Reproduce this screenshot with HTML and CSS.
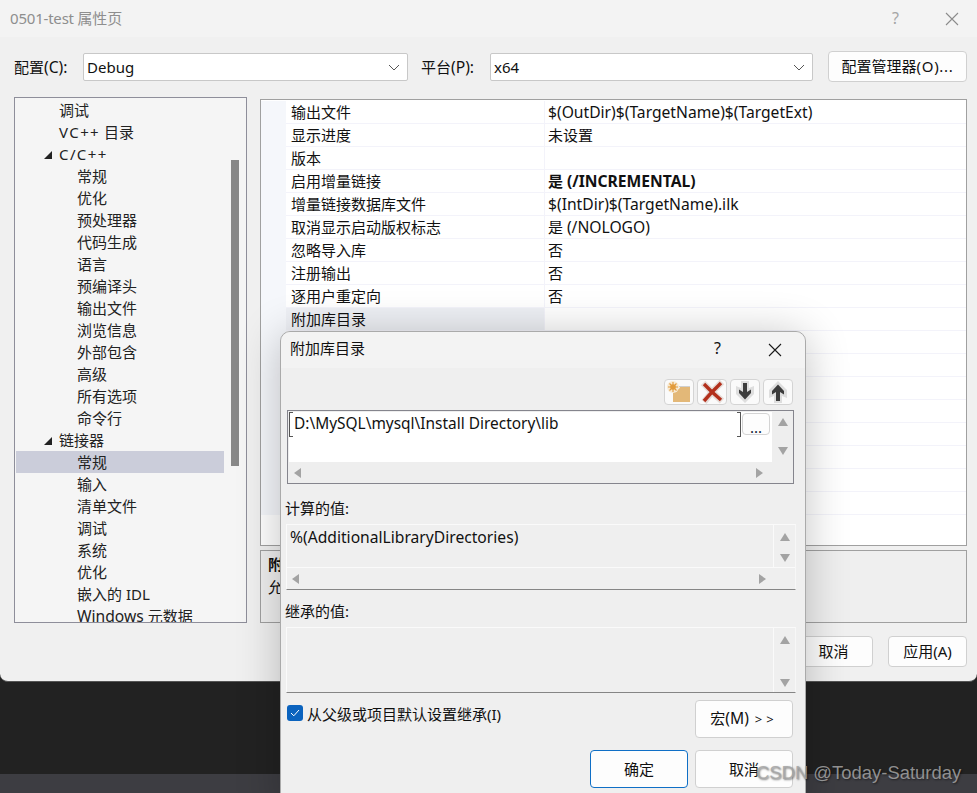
FILE: index.html
```html
<!DOCTYPE html>
<html lang="zh-CN">
<head>
	<meta charset="UTF-8">
	<title>0501-test 属性页</title>
	<link rel="stylesheet" href="styles.css">
</head>
<body>
	<div class="desktop">
		<!-- main property window -->
		<div class="window">
			<div class="titlebar">
				<span class="title-dim">0501-test 属性页</span>
				<span class="help dim">?</span>
				<svg class="close" width="14" height="14" viewBox="0 0 14 14"><path d="M1 1L13 13M13 1L1 13" stroke="#8b8b8b" stroke-width="1.1" fill="none"/></svg>
			</div>
			<div class="config-row">
				<label class="config-label">配置<span class="lat">(C):</span></label>
				<div class="combo combo-config">Debug
					<svg class="chev" width="12" height="7" viewBox="0 0 12 7"><path d="M1 1L6 6L11 1" stroke="#555" fill="none"/></svg>
				</div>
				<label class="platform-label">平台<span class="lat">(P):</span></label>
				<div class="combo combo-platform">x64
					<svg class="chev" width="12" height="7" viewBox="0 0 12 7"><path d="M1 1L6 6L11 1" stroke="#555" fill="none"/></svg>
				</div>
				<button class="btn btn-manager">配置管理器<span class="wide-sm">(O)...</span></button>
			</div>
			<div class="panes">
				<div class="tree">
					<div class="tree-list">
						<div class="node lv1">调试</div>
						<div class="node lv1"><span class="wide">VC++</span> 目录</div>
						<div class="node lv1 open"><span class="wide">C/C++</span></div>
						<div class="node lv2">常规</div>
						<div class="node lv2">优化</div>
						<div class="node lv2">预处理器</div>
						<div class="node lv2">代码生成</div>
						<div class="node lv2">语言</div>
						<div class="node lv2">预编译头</div>
						<div class="node lv2">输出文件</div>
						<div class="node lv2">浏览信息</div>
						<div class="node lv2">外部包含</div>
						<div class="node lv2">高级</div>
						<div class="node lv2">所有选项</div>
						<div class="node lv2">命令行</div>
						<div class="node lv1 open">链接器</div>
						<div class="node lv2 selected">常规</div>
						<div class="node lv2">输入</div>
						<div class="node lv2">清单文件</div>
						<div class="node lv2">调试</div>
						<div class="node lv2">系统</div>
						<div class="node lv2">优化</div>
						<div class="node lv2">嵌入的 IDL</div>
						<div class="node lv2"><span class="lat">Windows</span> 元数据</div>
					</div>
					<div class="tree-scroll"><div class="thumb"></div></div>
				</div>
				<div class="right-col">
					<div class="grid">
						<div class="row"><div class="key">输出文件</div><div class="val lat">$(OutDir)$(TargetName)$(TargetExt)</div></div>
						<div class="row"><div class="key">显示进度</div><div class="val">未设置</div></div>
						<div class="row"><div class="key">版本</div><div class="val"></div></div>
						<div class="row"><div class="key">启用增量链接</div><div class="val bold">是 <span class="lat">(/INCREMENTAL)</span></div></div>
						<div class="row"><div class="key">增量链接数据库文件</div><div class="val lat">$(IntDir)$(TargetName).ilk</div></div>
						<div class="row"><div class="key">取消显示启动版权标志</div><div class="val">是 <span class="lat">(/NOLOGO)</span></div></div>
						<div class="row"><div class="key">忽略导入库</div><div class="val">否</div></div>
						<div class="row"><div class="key">注册输出</div><div class="val">否</div></div>
						<div class="row"><div class="key">逐用户重定向</div><div class="val">否</div></div>
						<div class="row active"><div class="key">附加库目录</div><div class="val"></div></div>
						<div class="row"><div class="key"></div><div class="val"></div></div>
						<div class="row"><div class="key"></div><div class="val"></div></div>
						<div class="row"><div class="key"></div><div class="val"></div></div>
						<div class="row"><div class="key"></div><div class="val"></div></div>
						<div class="row"><div class="key"></div><div class="val"></div></div>
						<div class="row"><div class="key"></div><div class="val"></div></div>
						<div class="row"><div class="key"></div><div class="val"></div></div>
						<div class="row"><div class="key"></div><div class="val"></div></div>
					</div>
					<div class="desc">
						<div class="bold">附加库目录</div>
						<div>允许用户重写环境库路径。</div>
					</div>
				</div>
			</div>
			<div class="window-actions">
				<button class="btn btn-action">取消</button>
				<button class="btn btn-action">应用(A)</button>
			</div>
		</div>
		<div class="desk"></div>
		<div class="strip"></div>

		<!-- dialog over the window -->
		<div class="dialog">
			<div class="titlebar dialog-title">
				<span>附加库目录</span>
				<span class="help">?</span>
				<svg class="close" width="14" height="14" viewBox="0 0 14 14"><path d="M1 1L13 13M13 1L1 13" stroke="#1a1a1a" stroke-width="1.1" fill="none"/></svg>
			</div>
			<div class="toolbar">
				<button class="tool">
					<svg width="26" height="24" viewBox="0 0 26 24">
						<path d="M7 9H13L14 7H24V22H7Z" fill="#e3b878"/>
						<path d="M13 6.5H24" stroke="#cfcfcf" stroke-width="1"/>
						<circle cx="7" cy="7" r="6" fill="#f7e9d2"/>
						<circle cx="7" cy="7" r="2.8" fill="#e29b3c"/>
						<path d="M7 2V12M2 7H12M3.5 3.5L10.5 10.5M10.5 3.5L3.5 10.5" stroke="#e29b3c" stroke-width="1.1"/>
					</svg>
				</button>
				<button class="tool">
					<svg width="26" height="24" viewBox="0 0 26 24">
						<path d="M4 3L13 12L23 2M5 22L13 12L23 21" stroke="#e6dcd8" stroke-width="6.5" fill="none"/>
						<path d="M5 4L13 12L22 3M5 21L13 12L22 20" stroke="#b3301c" stroke-width="3.4" fill="none"/>
					</svg>
				</button>
				<button class="tool">
					<svg width="22" height="24" viewBox="0 0 22 24">
						<path d="M7 1H15V8L20 6V14L11 23L2 14V6L7 8Z" fill="#dedede"/>
						<path d="M9 3H13V12L17 9.5V13L11 19.5L5 13V9.5L9 12Z" fill="#3c3c3c"/>
					</svg>
				</button>
				<button class="tool">
					<svg width="22" height="24" viewBox="0 0 22 24">
						<path d="M7 23H15V16L20 18V10L11 1L2 10V18L7 16Z" fill="#dedede"/>
						<path d="M9 21H13V12L17 14.5V11L11 4.5L5 11V14.5L9 12Z" fill="#3c3c3c"/>
					</svg>
				</button>
			</div>
			<div class="listbox">
				<div class="listbox-main">
					<div class="list-area">
						<div class="edit-line">
							<div class="edit-text"><span class="path">D:\MySQL\mysql\Install Directory\lib</span></div>
							<button class="browse">...</button>
						</div>
					</div>
					<div class="vscroll"><i class="arrow up"></i><i class="arrow down"></i></div>
				</div>
				<div class="hscroll"><i class="arrow left"></i><i class="arrow right"></i></div>
			</div>

			<div class="field-label">计算的值:</div>
			<div class="readonly calc">
				<div class="readonly-main">
					<div class="readonly-text lat">%(AdditionalLibraryDirectories)</div>
					<div class="vscroll flat"><i class="arrow up"></i><i class="arrow down"></i></div>
				</div>
				<div class="hscroll flat"><i class="arrow left"></i><i class="arrow right"></i></div>
			</div>

			<div class="field-label second">继承的值:</div>
			<div class="readonly inherit">
				<div class="readonly-main">
					<div class="readonly-text"></div>
					<div class="vscroll flat"><i class="arrow up"></i><i class="arrow down"></i></div>
				</div>
			</div>

			<div class="inherit-row">
				<label class="check">
					<span class="checkbox"><svg width="10" height="8" viewBox="0 0 10 8"><path d="M1 4L3.8 6.8L9 1" stroke="#fff" stroke-width="1" fill="none"/></svg></span>
					从父级或项目默认设置继承(I)
				</label>
				<button class="btn btn-dialog">宏<span class="lat">(M)</span> <span class="gt">&gt;&gt;</span></button>
			</div>
			<div class="dialog-actions">
				<button class="btn btn-dialog primary">确定</button>
				<button class="btn btn-dialog">取消</button>
			</div>
		</div>

		<div class="watermark">CSDN @Today-Saturday</div>
	</div>
</body>
</html>
```

FILE: styles.css
```css
* {
	box-sizing: border-box;
}
html, body {
	margin: 0;
	padding: 0;
	height: 100%;
	overflow: hidden;
}
body {
	font-family: "Noto Sans", "Noto Sans CJK SC", sans-serif;
	font-size: 15px;
	color: #111;
}
.desktop {
	position: relative;
	width: 977px;
	height: 793px;
	display: flex;
	flex-direction: column;
	overflow: hidden;
	background: #222;
}
.bold {
	font-weight: 700;
}
.lat {
	font-size: 15.65px;
}
.path {
	font-size: 15.45px;
}
.wide {
	letter-spacing: 1.4px;
}
.wide-sm {
	letter-spacing: 0.7px;
}

/* main window */
.window {
	height: 682px;
	flex: none;
	background: #f0f0f0;
	border-radius: 0 0 8px 8px;
	border-bottom: 1px solid #555;
}
.titlebar {
	height: 37px;
	display: flex;
	align-items: center;
	padding: 0 0 3px 10px;
	background: #f3f3f3;
}
.title-dim {
	color: #8e8e8e;
	flex: 1;
	letter-spacing: -0.2px;
}
.help {
	font-size: 16px;
	margin: 2px 46px 0 0;
}
.help.dim {
	color: #a5a5a5;
}
.close {
	margin: 3px 18px 0 0;
}
.config-row {
	height: 46px;
	padding: 14px 10px 0 14px;
	display: flex;
	align-items: flex-start;
}
.config-label, .platform-label {
	line-height: 30px;
	margin-top: 1px;
	width: 69px;
}
.combo {
	height: 28px;
	margin-top: 2px;
	line-height: 27px;
	padding-left: 3px;
	background: #fff;
	border: 1px solid #c8c8c8;
	border-radius: 2px;
	position: relative;
}
.combo-config {
	width: 325px;
	margin-right: 13px;
}
.combo-platform {
	width: 323px;
	margin-right: 15px;
}
.chev {
	position: absolute;
	right: 7px;
	top: 10px;
}
.btn {
	font: inherit;
	color: #111;
	background: #fdfdfd;
	border: 1px solid #d0d0d0;
	border-radius: 4px;
	padding: 0 0 2px;
}
.btn-manager {
	width: 139px;
	height: 31px;
}
.panes {
	display: flex;
	padding: 14px 10px 0 14px;
}
.tree {
	width: 233px;
	height: 526px;
	flex: none;
	display: flex;
	background: #f5f5f5;
	border: 1px solid #8e8e9a;
	margin-right: 13px;
	overflow: hidden;
}
.tree-list {
	width: 209px;
	padding: 1px 0 0 1px;
	flex: none;
}
.node {
	height: 22px;
	line-height: 22px;
	white-space: nowrap;
	position: relative;
	color: #222;
}
.lv1 {
	padding-left: 43px;
}
.lv2 {
	padding-left: 61px;
}
.open::before {
	content: "";
	position: absolute;
	left: 28px;
	top: 8px;
	border-style: solid;
	border-width: 0 0 8px 8px;
	border-color: transparent transparent #222 transparent;
}
.selected {
	background: #cbcdda;
}
.tree-scroll {
	flex: 1;
	padding: 62px 7px 0 7px;
}
.thumb {
	height: 306px;
	background: #888;
}
.right-col {
	flex: 1;
	display: flex;
	flex-direction: column;
	padding-top: 2px;
}
.grid {
	height: 447px;
	background: #fff;
	border: 1px solid #a0a0a0;
	padding-top: 1px;
	overflow: hidden;
}
.row {
	height: 23px;
	display: flex;
	line-height: 21px;
	border-bottom: 1px solid #f3f3fa;
	margin-left: 25px;
	position: relative;
}
.row::before {
	content: "";
	position: absolute;
	left: -25px;
	top: 0;
	bottom: -1px;
	width: 25px;
	background: #f5f7fb;
}
.key {
	width: 259px;
	padding: 1px 0 0 5px;
	flex: none;
	border-right: 1px solid #f3f3fa;
}
.val {
	flex: 1;
	padding: 1px 0 0 3px;
}
.active .key {
	background: #eef0f5;
}
.desc {
	margin-top: 4px;
	height: 73px;
	padding: 2px 7px;
	background: #efefef;
	border: 1px solid #a0a0a0;
	line-height: 23px;
}
.window-actions {
	display: flex;
	justify-content: flex-end;
	gap: 15px;
	padding: 13px 10px 0 0;
}
.btn-action {
	width: 79px;
	height: 31px;
}
.desk {
	flex: 1;
	background: #222;
}
.strip {
	height: 19px;
	flex: none;
	background: #3d3d42;
}

/* dialog */
.dialog {
	position: absolute;
	left: 280px;
	top: 331px;
	width: 526px;
	height: 480px;
	background: #efefef;
	border: 1px solid #aaa;
	border-radius: 10px 10px 0 0;
	box-shadow: 0 4px 44px rgba(0, 0, 0, 0.24);
}
.dialog-title {
	height: 36px;
	border-radius: 10px 10px 0 0;
	padding-left: 9px;
	padding-bottom: 5px;
	justify-content: flex-start;
}
.dialog-title span:first-child {
	flex: 1;
}
.dialog-title .help {
	margin: 0 47px 0 0;
}
.dialog-title .close {
	margin: 4px 23px 0 0;
}
.toolbar {
	height: 42px;
	padding: 11px 12px 0 0;
	display: flex;
	justify-content: flex-end;
	gap: 3px;
}
.tool {
	width: 30px;
	height: 26px;
	padding: 0;
	background: #fafafa;
	border: 1px solid #d4d4d4;
	border-radius: 4px;
	display: flex;
	align-items: center;
	justify-content: center;
}
.tool svg {
	display: block;
}
.listbox {
	margin: 0 11px 0 6px;
	height: 74px;
	border: 1px solid #85858d;
	background: #eee;
	padding: 1px;
}
.listbox-main {
	display: flex;
	height: 50px;
}
.list-area {
	flex: 1;
	background: #fff;
}
.edit-line {
	display: flex;
	height: 24px;
	padding-right: 2px;
}
.edit-text {
	width: 452px;
	line-height: 22px;
	padding-left: 5px;
	position: relative;
}
/* the edit cell only shows its corners */
.edit-text::before,
.edit-text::after {
	content: "";
	position: absolute;
	top: 0;
	width: 3px;
	height: 23px;
	border: 1px solid #555;
}
.edit-text::before {
	left: 0;
	border-right: 0;
}
.edit-text::after {
	right: 0;
	border-left: 0;
}
.browse {
	font: inherit;
	width: 28px;
	height: 22px;
	margin: 1px 0 0 1px;
	padding: 5px 0 0;
	line-height: 14px;
	color: #123;
	background: #fdfdfd;
	border: 1px solid #d4d4d4;
	border-radius: 4px;
}
.vscroll {
	width: 21px;
	flex: none;
	display: flex;
	flex-direction: column;
	justify-content: space-between;
	align-items: center;
	padding: 6px 0 7px;
}
.hscroll {
	height: 21px;
	display: flex;
	justify-content: space-between;
	align-items: center;
	padding: 0 29px 0 5px;
}
.arrow {
	display: block;
	width: 0;
	height: 0;
	border-style: solid;
}
.arrow.up {
	border-width: 0 5px 8px 5px;
	border-color: transparent transparent #a3a3a3 transparent;
}
.arrow.down {
	border-width: 8px 5px 0 5px;
	border-color: #a3a3a3 transparent transparent transparent;
}
.arrow.left {
	border-width: 5px 7px 5px 0;
	border-color: transparent #a3a3a3 transparent transparent;
}
.arrow.right {
	border-width: 5px 0 5px 7px;
	border-color: transparent transparent transparent #a3a3a3;
}
.field-label {
	margin: 13px 0 0 4px;
	height: 27px;
	line-height: 22px;
}
.field-label.second {
	margin-top: 10px;
	height: 27px;
}
.readonly {
	margin: 0 9px 0 5px;
	border-top: 1px solid #fafafa;
	border-left: 1px solid #fafafa;
	border-right: 1px solid #f7f7f7;
	border-bottom: 1px solid #858585;
}
.readonly.calc,
.readonly.inherit {
	height: 66px;
}
.readonly-main {
	display: flex;
	height: 43px;
	border-bottom: 1px solid #fafafa;
}
.inherit .readonly-main {
	height: 64px;
	border-bottom: 0;
}
.readonly-text {
	flex: 1;
	padding-left: 3px;
	line-height: 24px;
	border-right: 1px solid #fafafa;
}
.flat.vscroll {
	padding: 8px 0 5px;
}
.flat.hscroll {
	height: 21px;
}
.inherit-row {
	display: flex;
	justify-content: space-between;
	padding: 7px 12px 0 6px;
}
.check {
	display: flex;
	align-items: center;
	height: 24px;
	gap: 4px;
	margin-top: 1px;
}
.checkbox {
	width: 16px;
	height: 16px;
	background: #0b63be;
	border-radius: 3px;
	display: flex;
	align-items: center;
	justify-content: center;
}
.btn-dialog {
	width: 98px;
	height: 38px;
}
.gt {
	letter-spacing: 4px;
	font-size: 13px;
	margin-left: 2px;
}
.dialog-actions {
	display: flex;
	justify-content: flex-end;
	gap: 7px;
	padding: 12px 12px 0 0;
}
.primary {
	border: 1.5px solid #0f6fc6;
}

.watermark {
	position: absolute;
	left: 756px;
	top: 760px;
	font-family: "Liberation Sans", sans-serif;
	font-size: 18.45px;
	line-height: 26px;
	color: rgba(165, 165, 165, 0.85);
	text-shadow: 1px 1px 2px rgba(0, 0, 0, 0.5);
}
```
